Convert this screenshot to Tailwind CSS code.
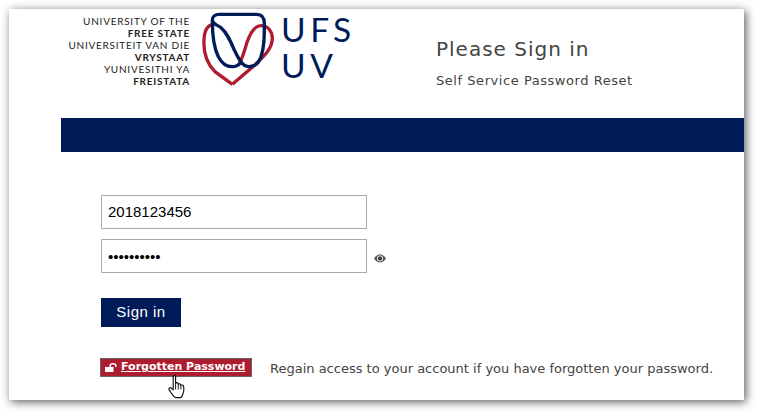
<!DOCTYPE html>
<html lang="en">
<head>
    <meta charset="UTF-8">
    <meta name="viewport" content="width=device-width, initial-scale=1.0">
    <title>Please Sign in</title>
    <script src="https://cdn.jsdelivr.net/npm/@tailwindcss/browser@4"></script>
</head>
<body class="bg-white overflow-hidden h-[414px] font-['Liberation_Sans',sans-serif]">

<div class="ml-[9px] mt-[9px] w-[735px] h-[391px] bg-white shadow-[2px_2px_9px_rgba(0,0,0,0.65)] overflow-hidden">

    <!-- Header -->
    <div class="flex h-[109px]">
        <div class="w-[181px] pt-[7px] text-right text-[10px] leading-[11.9px] tracking-[0.75px] text-[#222] font-['Lato',sans-serif]">
            <p>UNIVERSITY OF THE</p>
            <p class="font-bold">FREE STATE</p>
            <p>UNIVERSITEIT VAN DIE</p>
            <p class="font-bold">VRYSTAAT</p>
            <p>YUNIVESITHI YA</p>
            <p class="font-bold">FREISTATA</p>
        </div>
        <svg class="ml-[5px] shrink-0 -mt-[4px]" width="80" height="85" viewBox="0 0 240 255" fill="none" stroke-width="10">
            <path stroke="#ae1c2f" d="M112 238 L60 200 C35 175 25 140 27 105 C28 75 38 60 55 58 M112 238 L170 188 C200 160 232 135 232 100 C232 78 218 62 198 62 C178 62 165 85 155 115 C148 140 142 160 132 178"/>
            <path stroke="#001c58" d="M72 28 L185 28 C200 28 208 38 208 55 C208 95 208 125 198 155 C190 178 175 186 160 185 C142 184 130 160 118 135 C105 105 95 82 78 68 C65 58 52 58 52 45 C52 35 60 28 72 28 Z M52 48 C52 90 55 125 70 155 C82 178 100 186 115 185 C125 184 132 180 140 170"/>
        </svg>
        <div class="ml-[6px] w-[76px] pt-[3px] text-[#001c58] text-[33.5px] leading-[35.5px] tracking-[4.5px] font-['Lato',sans-serif]">
            <p>UFS</p>
            <p>UV</p>
        </div>
        <div class="ml-[79px] pt-[26px] text-[#444] font-['DejaVu_Sans',sans-serif]">
            <h1 class="text-[20px] leading-[28px] tracking-[1px]">Please Sign in</h1>
            <p class="mt-[9px] text-[13px] leading-[18px] tracking-[0.55px]">Self Service Password Reset</p>
        </div>
    </div>

    <!-- Blue bar -->
    <div class="ml-[52px] h-[34px] bg-[#001c58]"></div>

    <!-- Form -->
    <div class="pl-[92px] pt-[43px]">
        <input type="text" value="2018123456" class="block w-[266px] h-[34px] border border-[#aaa] px-[6px] pb-[1px] text-[15px] text-black bg-white">
        <div class="flex items-center mt-[10px]">
            <input type="password" value="abcdefghij" class="block w-[266px] h-[34px] border border-[#aaa] px-[6px] text-[15px] text-black bg-white">
            <svg class="ml-[7px] mt-[4px]" width="12" height="9" viewBox="0 0 12 9">
                <path fill="#555" d="M6 0.5C3.4 0.5 1.2 2.2 0 4.5 1.2 6.8 3.4 8.5 6 8.5S10.8 6.8 12 4.5C10.8 2.2 8.6 0.5 6 0.5Z"/>
                <circle cx="6" cy="4.5" r="3" fill="#fff"/>
                <circle cx="6" cy="4.5" r="2.2" fill="#444"/>
            </svg>
        </div>
        <button class="block mt-[25px] w-[80px] h-[29px] bg-[#001c58] text-white text-[15px] tracking-[0.5px]">Sign in</button>

        <div class="flex items-start mt-[31px] -ml-[1px]">
            <a href="#" class="relative flex items-center w-[152px] h-[19px] pl-[4px] border border-[#666] bg-[#ae1c2f] text-white font-bold text-[11px] font-['DejaVu_Sans',sans-serif]">
                <svg width="12" height="9" viewBox="0 0 12 9">
                    <rect x="0" y="4" width="8.5" height="5" fill="#fff"/>
                    <path d="M5.2 4.5V2.6C5.2 1.3 6.6 0.8 8 0.8S10.8 1.3 10.8 2.6V4" fill="none" stroke="#fff" stroke-width="1.5"/>
                </svg>
                <span class="ml-[4px] underline">Forgotten Password</span>
                <!-- hand cursor from the capture -->
                <svg class="absolute left-[67px] top-[16px]" width="19" height="24" viewBox="0 0 19 25">
                    <path fill="#fff" stroke="#111" stroke-width="1.2" stroke-linejoin="round" d="M5 1.5C5 0.4 7.5 0.4 7.5 1.5V9C8 7.5 10 7.5 10.3 9V10C10.8 8.8 12.6 8.8 13 10.2V11C13.6 10 15.6 10.3 15.8 11.8C16.2 14 16 18 15 20C14.5 21.5 13.5 23.5 12.5 23.5H7.5C6 23.5 5 21.5 3.5 19.5L0.8 15.5C0 14 1.8 12.6 3 13.6L5 15.5Z"/>
                    <path stroke="#111" stroke-width="1" d="M7.5 9V15M10.3 10V15M13 11V15"/>
                </svg>
            </a>
            <p class="ml-[18px] mt-[1px] text-[13px] leading-[19px] whitespace-nowrap text-[#444] font-['DejaVu_Sans',sans-serif]">Regain access to your account if you have forgotten your password.</p>
        </div>
    </div>
</div>

</body>
</html>
